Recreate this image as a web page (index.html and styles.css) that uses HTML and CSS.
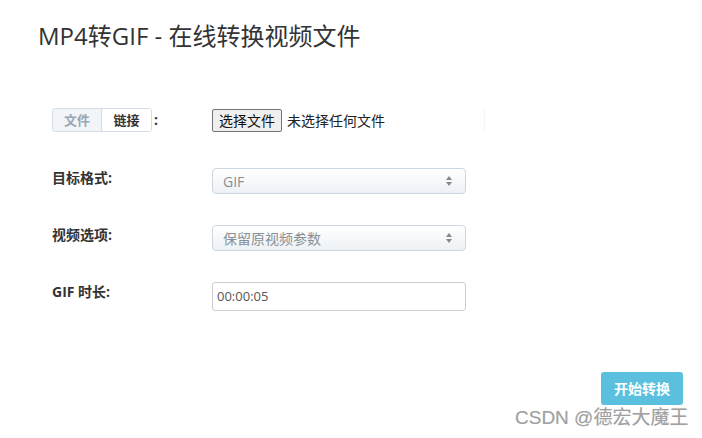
FILE: index.html
```html
<!DOCTYPE html>
<html lang="zh-CN">
<head>
    <meta charset="UTF-8">
    <title>MP4转GIF - 在线转换视频文件</title>
    <link rel="stylesheet" href="styles.css">
</head>
<body>
<div class="page">
    <h1 class="title">MP4转GIF - 在线转换视频文件</h1>
    <form class="form">
        <div class="row row-file">
            <div class="label">
                <div class="tabs">
                    <span class="tab tab-off">文件</span>
                    <span class="tab tab-on">链接</span>
                </div>
                <span class="colon">:</span>
            </div>
            <div class="control file-box">
                <span class="file-btn">选择文件</span>
                <span class="file-name">未选择任何文件</span>
            </div>
        </div>
        <div class="row">
            <div class="label">目标格式:</div>
            <div class="control select">
                <span class="select-text">GIF</span>
                <span class="arrows"><i class="up"></i><i class="down"></i></span>
            </div>
        </div>
        <div class="row">
            <div class="label">视频选项:</div>
            <div class="control select">
                <span class="select-text">保留原视频参数</span>
                <span class="arrows"><i class="up"></i><i class="down"></i></span>
            </div>
        </div>
        <div class="row">
            <div class="label">GIF 时长:</div>
            <div class="control text-input">00:00:05</div>
        </div>
        <div class="actions">
            <span class="btn">开始转换</span>
        </div>
    </form>
    <div class="mark">CSDN @德宏大魔王</div>
</div>
</body>
</html>
```
FILE: styles.css
```css
*{
    margin: 0;
    padding: 0;
    box-sizing: border-box;
}
body{
    background: #fff;
    font-family: "Open Sans", "Noto Sans CJK SC", sans-serif;
    color: #333;
}
.page{
    position: relative;
    width: 702px;
    height: 438px;
    padding: 19px 0 0 38px;
}
.title{
    font-size: 24px;
    font-weight: normal;
    line-height: 34px;
    color: #333;
}
.form{
    padding: 55px 0 0 14px;
}
.row{
    display: flex;
    align-items: flex-start;
    margin-bottom: 31px;
}
.row-file{
    margin-bottom: 36px;
}
.label{
    width: 160px;
    font-size: 14px;
    font-weight: bold;
    line-height: 20px;
    padding-top: 0;
    color: #333;
}
.row-file .label{
    display: flex;
    align-items: center;
}
.tabs{
    display: flex;
    height: 24px;
    border: 1px solid #d3dde7;
    border-radius: 3px;
    overflow: hidden;
}
.tab{
    display: block;
    width: 49px;
    line-height: 22px;
    text-align: center;
    font-size: 13px;
    font-weight: bold;
}
.tab-off{
    background: #f2f5f8;
    color: #9aa6b3;
    border-right: 1px solid #d3dde7;
}
.tab-on{
    background: #fff;
    color: #333;
}
.colon{
    margin-left: 2px;
    font-size: 14px;
}
.control{
    width: 254px;
}
.file-box{
    display: flex;
    align-items: center;
    height: 24px;
    border-right: 1px solid #f6f6f6;
    width: 273px;
}
.file-btn{
    display: block;
    height: 23px;
    padding: 0 6px;
    line-height: 21px;
    font-size: 14px;
    color: #111;
    background: #efefef;
    border: 1px solid #767676;
    border-radius: 2px;
}
.file-name{
    margin-left: 5px;
    font-size: 14px;
    color: #222;
}
.select{
    display: flex;
    align-items: center;
    justify-content: space-between;
    height: 26px;
    padding: 0 13px 0 10px;
    border: 1px solid #cbd8e3;
    border-radius: 4px;
    background: linear-gradient(#ffffff, #edf1f5);
}
.select-text{
    font-size: 14px;
    color: #8a8f96;
}
.arrows{
    display: flex;
    flex-direction: column;
    gap: 2px;
}
.arrows i{
    display: block;
    width: 0;
    height: 0;
    border-left: 3px solid transparent;
    border-right: 3px solid transparent;
}
.arrows .up{
    border-bottom: 4px solid #888;
}
.arrows .down{
    border-top: 4px solid #888;
}
.text-input{
    height: 29px;
    padding: 0 4px;
    line-height: 27px;
    font-size: 13px;
    color: #555;
    border: 1px solid #c9ced3;
    border-radius: 3px;
}
.actions{
    display: flex;
    justify-content: flex-end;
    padding: 30px 19px 0 0;
}
.btn{
    display: block;
    width: 82px;
    height: 33px;
    line-height: 33px;
    text-align: center;
    font-size: 14px;
    font-weight: bold;
    color: #fff;
    background: #5bc0de;
    border-radius: 3px;
}
.mark{
    position: absolute;
    left: 515px;
    top: 406px;
    line-height: 24px;
    font-family: "Liberation Sans", "Noto Sans CJK SC", sans-serif;
    font-size: 19px;
    color: #a0a0a0;
    text-shadow: 0 0 1px #ddd;
}
```
